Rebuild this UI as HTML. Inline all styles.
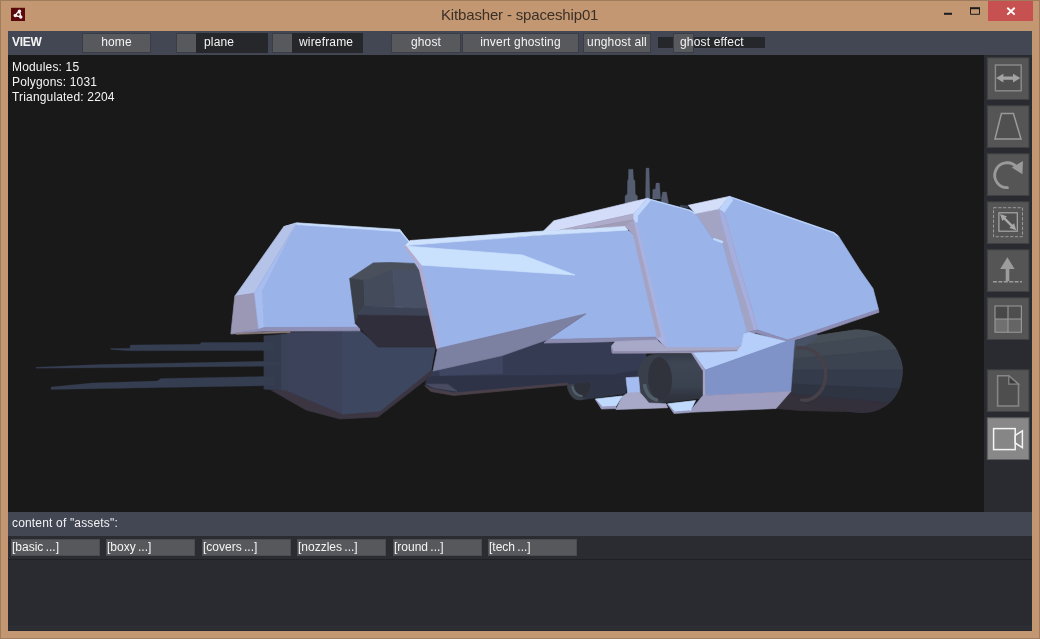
<!DOCTYPE html>
<html>
<head>
<meta charset="utf-8">
<title>Kitbasher - spaceship01</title>
<style>
*{box-sizing:border-box;margin:0;padding:0}
html,body{width:1040px;height:639px;overflow:hidden;background:#c39772;font-family:"Liberation Sans",sans-serif;font-size:12px;color:#f2f2f2}
#win{position:absolute;left:0;top:0;width:1040px;height:639px;background:#c39772;border:1px solid #a07c5f}
#title{will-change:transform;position:absolute;left:440px;top:5px;white-space:nowrap;font-size:15px;color:#3a3027;line-height:18px;letter-spacing:-.16px}
.abs{position:absolute}
.btn,.lbl,.fold,.stats,#toolbar .abs,#assetbar .abs{will-change:transform}
#content{position:absolute;left:8px;top:31px;width:1024px;height:600px;background:#2a2b30;overflow:hidden}
#toolbar{position:absolute;left:0;top:0;width:1024px;height:24px;background:#424753}
#viewport{position:absolute;left:0;top:24px;width:976px;height:457px;background:#191919}
#side{position:absolute;left:976px;top:24px;width:48px;height:457px;background:#2a2b30}
#assetbar{position:absolute;left:0;top:481px;width:1024px;height:24px;background:#424753}
#folders{position:absolute;left:0;top:505px;width:1024px;height:24px;background:#2b2c31;border-bottom:1px solid #1f2024}
#lower{position:absolute;left:0;top:529px;width:1024px;height:71px;background:#2a2b30}
#lower:before,#lower:after{content:"";position:absolute;left:0;width:1024px;height:1px;background:#303136}
#lower:before{top:66px}#lower:after{top:68px}
.btn{position:absolute;top:2px;height:20px;background:#58595d;border:1px solid #3a3d46;text-align:center;line-height:16px;letter-spacing:.17px;font-size:12px;color:#f4f4f4;white-space:nowrap}
.chk{position:absolute;top:2px;height:20px;width:21px;background:#58595d;border:1px solid #3a3d46}
.lbl{position:absolute;top:2px;height:20px;background:#26272b;line-height:18px;letter-spacing:.17px;font-size:12px;color:#f4f4f4;white-space:nowrap}
.fold{position:absolute;top:3px;height:17px;width:89px;background:#57585b;border:1px solid #4b4c50;line-height:14px;padding-left:0px;word-spacing:-1px;font-size:12px;color:#f4f4f4;white-space:nowrap}
.stats{position:absolute;left:4px;top:5px;line-height:15px;letter-spacing:.17px;font-size:12px;color:#f4f4f4;white-space:pre}
</style>
</head>
<body>
<div id="win">
<div id="title">Kitbasher - spaceship01</div>
</div>
<svg width="1040" height="31" viewBox="0 0 1040 31" style="position:absolute;left:0;top:0">
<rect x="11" y="7.8" width="14" height="13.2" fill="#5b080c"/>
<g fill="#f6f2f2"><circle cx="19.4" cy="11.2" r="1.7"/><circle cx="15.3" cy="15.4" r="1.75"/><circle cx="20.8" cy="17" r="1.7"/><circle cx="18.4" cy="14.4" r="2.5"/><path d="M19.4,11.2 L15.3,15.4 L20.8,17 Z" stroke="#f6f2f2" stroke-width="1.2" stroke-linejoin="round"/></g>
<circle cx="18.4" cy="14.4" r="1.25" fill="#5b080c"/>
<rect x="944" y="12.8" width="8" height="2" fill="#1c1c1c"/>
<path fill="none" stroke="#1c1c1c" stroke-width="1" d="M970.5,8.5 H979.5 V14.3 H970.5 Z"/>
<rect x="970" y="7.2" width="10" height="2" fill="#1c1c1c"/>
<rect x="988" y="1" width="45" height="20" fill="#c75050"/>
<path fill="none" stroke="#ffffff" stroke-width="1.9" d="M1007.3,7.8 L1014.7,14.6 M1014.7,7.8 L1007.3,14.6"/>
</svg>
<div id="content">
  <div id="toolbar">
    <div class="abs" style="left:4px;top:4px;font-weight:bold;font-size:12px;line-height:15px;color:#f4f4f4;letter-spacing:-.25px">VIEW</div>
    <div class="btn" style="left:74px;width:69px">home</div>
    <div class="chk" style="left:168px"></div>
    <div class="lbl" style="left:188px;width:72px;padding-left:8px">plane</div>
    <div class="chk" style="left:264px"></div>
    <div class="lbl" style="left:284px;width:71px;padding-left:7px">wireframe</div>
    <div class="btn" style="left:383px;width:70px">ghost</div>
    <div class="btn" style="left:454px;width:117px">invert ghosting</div>
    <div class="btn" style="left:575px;width:68px">unghost all</div>
    <div class="abs" style="left:650px;top:6px;width:107px;height:11px;background:#26272b"></div>
    <div class="chk" style="left:665px"></div>
    <div class="abs" style="left:672px;top:2px;line-height:18px;font-size:12px;color:#f4f4f4;letter-spacing:.17px">ghost effect</div>
  </div>
  <div id="viewport">
<svg id="ship" width="1040" height="639" viewBox="0 0 1040 639" style="position:absolute;left:-8px;top:-55px" shape-rendering="geometricPrecision" stroke-width="0.7" stroke-linejoin="round">
<!-- antennas -->
<g fill="#555d71" stroke="#555d71" stroke-width="0.3">
<polygon points="628.6,169.2 633,169.2 633.5,179 635,181 635.3,194 637.5,196 637.5,203 625,203 625,196 627.3,194 627.5,181 628.4,179"/>
<polygon points="646,168 649,168 650,199 645.5,199"/>
<polygon points="656,183 659.5,183 660.5,199 652.5,199 652.8,189.5 655.5,189"/>
<polygon points="662.5,192 666.5,192 667.5,198 668.5,203 661,203 661.5,198"/>
<polygon points="680,205 688,205.8 688,208 680,207" fill="#3a4152" stroke="#3a4152"/>
</g>
<!-- lower front hull -->
<polygon fill="#343b4e" stroke="#343b4e" points="264,336 287.5,334 287.5,391 264,389"/>
<polygon fill="#3a4258" stroke="#3a4258" points="281.5,334.5 287.5,334 287.5,391 281.5,390.5"/>
<!-- prongs -->
<g fill="#353e51" stroke="#353e51" stroke-width="0.3">
<polygon points="110.6,348.6 129.8,348.2 130.5,345 200,344.2 201,342.6 274,342.3 274,350.4 129.8,350.8 110.6,349.4"/>
<polygon points="36,367.3 100,364.6 280,361 280,366 100,367.8 36,368.3"/>
<polygon points="51,387 92,383 157,381 161,378.5 274,376.3 274,385.6 51,389.5"/>
</g>
<polygon fill="#3b3642" stroke="#3b3642" points="271,390 287.5,391 342.5,414 380,411 431,370 436,372 378,417 340,419 306,410"/>
<polygon fill="#3c425a" stroke="#3c425a" points="287.5,332.5 360,331 380,347.5 435,347.5 431,370 380,411 342.5,414 287.5,391"/>
<polygon fill="#3d4760" stroke="#3d4760" points="342.5,331.5 360,331 380,347.5 435,347.5 431,370 380,411 342.5,414"/>

<!-- rear small engine (behind) -->
<path fill="#2f3546" stroke="#2f3546" d="M579,365 L626,360 L626,393.5 L580,400 Z"/>
<ellipse cx="579" cy="382.6" rx="12" ry="17.4" fill="#3a414b" stroke="#3a414b"/>
<ellipse cx="582.5" cy="382.6" rx="8.2" ry="15" fill="#2d3039" stroke="#2d3039"/>
<path fill="none" stroke="#52606b" stroke-width="2.2" d="M572.2,386 C573,391 576,395.5 582.5,396.3"/>
<!-- third block gray side -->
<!-- underside dark -->
<polygon fill="#353b53" stroke="#353b53" points="433,371 502.5,355.5 548,340 612,343 646,350 646,375 567.5,384 453.75,394 432.5,390 425,386"/>
<polygon fill="#2f3347" stroke="#2f3347" points="427,378 433.9,376.2 611.7,375 646,369 646,375 567.5,384 453.75,394 432.5,390 425,386"/>
<polygon fill="#494c61" stroke="#494c61" points="427,384.2 447.7,384.2 457,391.2 434,387.7"/>
<polygon fill="#4a4049" stroke="#4a4049" points="425,386 432.5,389 453.75,393 567.5,383 567.5,385 453.75,395.5 431,391.5"/>
<polygon fill="#3e4661" stroke="#3e4661" points="438,366 502.5,355.5 502.5,373.5 440,375.5"/>
<!-- upper front armor -->
<polygon fill="#9ab3e9" stroke="#9ab3e9" points="296.4,224 400,231 410,242 416,250 437,340 360,327.5 264.1,327.5 262.2,291.3"/>
<polygon fill="#cadefc" stroke="#cadefc" points="283.7,226.7 296.4,222.8 400,229.5 410,243 400,231.5 296.4,224.6"/>
<polygon fill="#b5c3e8" stroke="#b5c3e8" points="283.7,226.7 296.4,223.6 254.4,293.3 234.8,296.2"/>
<polygon fill="#9a98b5" stroke="#9a98b5" points="234.8,296.2 254.4,293.3 258.7,329.5 230.9,333.4"/>
<polygon fill="#a7bdf0" stroke="#a7bdf0" points="296.4,223.8 262.2,291.3 264.1,327.5 258.7,329.5 254.4,293.3"/>
<polygon fill="#8f8fb6" stroke="#8f8fb6" points="230.9,333.4 258.7,329.3 264.1,327.5 360,327.3 360,330.8 262,331.3 231,334"/>
<polygon fill="#8e7c7e" stroke="#8e7c7e" points="236,333.3 290,331.3 290,332.5 236,334.3"/>
<!-- cockpit -->
<polygon fill="#4a505b" stroke="#4a505b" points="349.7,278.5 373.2,262.9 390,262.5 414.4,263.4 420,272 392.8,270.3 363.8,280.3"/>
<polygon fill="#3a3f49" stroke="#3a3f49" points="349.7,278.5 363.8,280.3 364.7,305.7 358,315 355.3,323.5"/>
<polygon fill="#444b5b" stroke="#444b5b" points="363.8,280.3 392.8,270 395.7,306.6 364.7,305.7"/>
<polygon fill="#475064" stroke="#475064" points="392.8,270 420,271 428,308.5 395.7,306.6"/>
<polygon fill="#3c4354" stroke="#3c4354" points="364.7,305.7 428,308.5 430,316 358,315"/>
<polygon fill="#2f2e3a" stroke="#2f2e3a" points="358,315 430,316 437,347 377.8,347 355.3,323.5"/>
<!-- back top block behind centre -->
<polygon fill="#d3ddf9" stroke="#d3ddf9" points="543,231.5 553.8,220.8 647.7,198.2 633.8,213.8 560,230"/>
<polygon fill="#aeacca" stroke="#aeacca" points="560,230 633.8,213.8 634.6,219.5 591,227.5"/>
<polygon fill="#a19db9" stroke="#a19db9" points="591,227.5 634.6,219.5 632.5,230 626,227"/>
<!-- centre block -->
<polygon fill="#9ab3e9" stroke="#9ab3e9" points="405,246 411,244.5 626,229.5 631,232.3 634,235.2 657.5,336 657.5,337 548,339.5 586,314 437.5,349 420,265"/>
<polygon fill="#cfe2fd" stroke="#cfe2fd" points="405,246 410,240.5 544,231 625.5,226.5 628,230 544,235 411,245"/>
<polygon fill="#c9e1fd" stroke="#c9e1fd" points="405,246 522.5,255 575,275 420,265"/>
<polygon fill="#b3abcd" stroke="#b3abcd" points="404,246.3 406,246 421,265 439,348.5 437,349.5 418.5,266"/>
<polygon fill="#7c80a1" stroke="#7c80a1" points="437.5,348.75 586,313.75 548,339.5 502.5,355.5 433,371"/>
<polygon fill="#8c8cb0" stroke="#8c8cb0" points="548,339.5 657.5,337 658,341 544,343"/>

<defs>
<linearGradient id="gEng" x1="0" y1="0" x2="0" y2="1">
<stop offset="0" stop-color="#464e58"/><stop offset="0.3" stop-color="#3b434f"/><stop offset="0.55" stop-color="#333a49"/><stop offset="0.85" stop-color="#2e3240"/><stop offset="1" stop-color="#36313a"/>
</linearGradient>
<linearGradient id="gCyl" x1="0" y1="0" x2="0" y2="1">
<stop offset="0" stop-color="#343a46"/><stop offset="0.2" stop-color="#3e4654"/><stop offset="0.65" stop-color="#3a4250"/><stop offset="0.85" stop-color="#30353f"/><stop offset="1" stop-color="#2c3039"/>
</linearGradient>
</defs>
<polygon fill="#a3a3c4" stroke="#a3a3c4" points="695.3,213.5 718.7,209.2 722.3,225.2 732,260.4 747,307.4 754,330.5 747,332.5 722.3,242 712.9,239.3"/>
<!-- second block -->
<polygon fill="#9ab3e9" stroke="#9ab3e9" points="647.7,198.5 690,210 695.3,213.5 712.9,239.3 722.3,242.3 747,332 743.8,333.8 741.5,345.4 736,348.5 667,348.5 657,338 636,252 634,214"/>
<polygon fill="#c2dbfd" stroke="#c2dbfd" points="712.9,239.3 714,238.3 723,241.5 722.3,243"/>
<polygon fill="#a6a2c2" stroke="#a6a2c2" points="625.5,226.8 633.8,219.3 634.2,222 661.6,337 657.3,338 657,336 633.5,235.2 631,232"/>
<polygon fill="#a9b2e0" stroke="#a9b2e0" points="634.2,222 636.6,222 667,348.5 657.3,338 661.6,337"/>
<polygon fill="#c0d6fb" stroke="#c0d6fb" points="647.7,198.5 650.5,200.5 637.5,216 637.5,222 635.4,222 633.8,219 633.8,213.8"/>
<!-- flange under second block -->
<polygon fill="#a8a8c8" stroke="#a8a8c8" points="611.5,346 615.4,341.5 657,340 666,347.5 736,347.5 740.5,346 740,351.5 690.8,353 661.5,353 612.3,353"/>
<polygon fill="#8e8aa8" stroke="#8e8aa8" points="611.5,346.5 612.3,353 738,351.8 737,350.3 661.5,351.5 613,351.5"/>
<!-- third block -->
<polygon fill="#d4def9" stroke="#d4def9" points="688.2,205.3 729.3,196.4 718.7,209 695.3,213.5"/>
<polygon fill="#9ab3e9" stroke="#9ab3e9" points="729.2,196.2 833.8,232.3 838.5,236 860,270 873,288.5 878.5,309.5 787.7,340 757.5,330 751.6,307.4 737.5,260.4 728,225.2 723.4,212.3"/>
<polygon fill="#bcd3fa" stroke="#bcd3fa" points="729.2,196.2 733,200 724,212.6 718.7,209.2"/>
<polygon fill="#a6aedd" stroke="#a6aedd" points="718.7,209.2 723.4,212.3 728,225.2 737.5,260.4 751.6,307.4 757.5,330 754,330.8 747,307.4 732,260.4 722.3,225.2"/>
<polygon fill="#8e8eb6" stroke="#8e8eb6" points="747,332.3 757.5,330 787.7,340 878.5,309.5 879,312.3 787.7,343.3 756,332.8 748,334"/>
<!-- big engine -->
<clipPath id="cEng"><path d="M794.9,340.3 L817.6,334.9 L855,329.4 C864,329.3 870,330.5 874,331.7 C881,334 886,337 889.5,340.3 C894,345 897,349 899,354.4 C901.5,360 902.8,365 902.8,370 C902.8,376 902,381 900.5,385.7 C899,391 896,396 892.7,399.8 C889,404 885,407 880,409.2 C874,412 868,413 861.4,413 L842.6,411.5 L819,406.8 L800.3,401.4 L791,393.5 Z"/></clipPath>
<g clip-path="url(#cEng)">
<path fill="url(#gEng)" d="M794.9,340.3 L817.6,334.9 L855,329.4 C864,329.3 870,330.5 874,331.7 C881,334 886,337 889.5,340.3 C894,345 897,349 899,354.4 C901.5,360 902.8,365 902.8,370 C902.8,376 902,381 900.5,385.7 C899,391 896,396 892.7,399.8 C889,404 885,407 880,409.2 C874,412 868,413 861.4,413 L842.6,411.5 L819,406.8 L800.3,401.4 L791,393.5 Z"/>
<polygon fill="#464e58" stroke="#464e58" points="788.0,320.0 912.0,320.0 912.0,331.5 788.0,347.5"/>
<polygon fill="#414954" stroke="#414954" points="788.0,347.5 912.0,331.5 912.0,348.3 788.0,359.3"/>
<polygon fill="#3b4350" stroke="#3b4350" points="788.0,359.3 912.0,348.3 912.0,370.0 788.0,370.0"/>
<polygon fill="#343b4b" stroke="#343b4b" points="788.0,370.0 912.0,370.0 912.0,389.5 788.0,384.0"/>
<polygon fill="#2f3443" stroke="#2f3443" points="788.0,384.0 912.0,389.5 912.0,405.1 788.0,393.7"/>
<polygon fill="#34303b" stroke="#34303b" points="788.0,393.7 912.0,405.1 912.0,420.0 788.0,420.0"/>
</g>
<path fill="#485266" stroke="none" d="M794.6,340.2 L817,333.6 L817,338.3 L806,345.5 L794.6,348.5 Z"/>
<path fill="none" stroke="#464049" stroke-width="3.4" d="M796,348 C808,346 821,352 825,368 C828,383 821,396 808,400 L800,400.5"/>
<polygon fill="#35313b" stroke="#35313b" points="790.8,391.5 776,408.5 800,410.5 842.6,411.5 819,406.8 800.3,401.4"/>
<!-- small engine 1 body -->
<path fill="url(#gCyl)" d="M655,353.8 L702.3,353.8 L702.3,398.5 L658,403.8 Z"/>
<!-- skid -->
<polygon fill="#b5cefa" stroke="#b5cefa" points="693,353 737,351.5 741.5,345.4 743.8,333.8 748.5,332.3 786,341.5 705.4,370"/>
<polygon fill="#a4a4c8" stroke="#a4a4c8" points="691.5,353 693,353 705.4,370 706,395.4 703,395.4 703,370.8"/>
<polygon fill="#7f93c9" stroke="#7f93c9" points="705.4,370 786,341.5 794.6,340 790.8,391.5 706,395.4"/>
<polygon fill="#9e9dc0" stroke="#9e9dc0" points="706,395.4 790.8,391.5 776,408.5 689,412.3 703,395.4"/>
<!-- small engine 1 ring -->
<ellipse cx="654.6" cy="379.2" rx="17" ry="24.6" fill="#3a404b" stroke="#3a404b" transform="rotate(-3 654.6 379.2)"/>
<ellipse cx="660" cy="379" rx="11.5" ry="21.5" fill="#30323c" stroke="#30323c" transform="rotate(-3 660 379)"/>
<path fill="none" stroke="#505e6a" stroke-width="3.4" d="M644.5,384 C645.5,392 650,398.5 658,400.3"/>
<!-- strut 1 + feet -->
<polygon fill="#a4bcf0" stroke="#a4bcf0" points="626,377.7 638.5,377 640,393 627.7,393.5"/>
<polygon fill="#a8a8c8" stroke="#a8a8c8" points="627.7,393 640,392.5 649,403 666,403.8 667.7,407.7 616,409.5 622.3,396.5"/>
<polygon fill="#c0dafd" stroke="#c0dafd" points="595.4,399 622.3,396 616,406.3 602.3,407"/>
<polygon fill="#9c9cc0" stroke="#9c9cc0" points="595.4,399.5 602.3,407 616,406.3 616,408.5 601.5,409"/>
<polygon fill="#c0dafd" stroke="#c0dafd" points="667.7,403.8 695.5,400.6 690.5,410.8 674.6,412"/>
<polygon fill="#9c9cc0" stroke="#9c9cc0" points="667.7,404.3 674.6,412 689,410.8 689,412.5 674,413.5"/>
<path fill="none" stroke="#bdd5fb" stroke-width="1.1" d="M729.5,196.8 L833.6,232.8 L838,236.3"/>
<path fill="none" stroke="#bdd5fb" stroke-width="1.1" d="M648,199 L690,210.5 L695,213.8"/>
</svg>

    <div class="stats">Modules: 15
Polygons: 1031
Triangulated: 2204</div>
  </div>
  <div id="side">
<svg width="48" height="457" viewBox="984 55 48 457" style="position:absolute;left:0;top:0">
<g fill="#555555" stroke="#3f4044" stroke-width="1">
<rect x="987.3" y="57.8" width="41.7" height="41.7"/>
<rect x="987.3" y="105.8" width="41.7" height="41.7"/>
<rect x="987.3" y="153.8" width="41.7" height="41.7"/>
<rect x="987.3" y="201.8" width="41.7" height="41.7"/>
<rect x="987.3" y="249.8" width="41.7" height="41.7"/>
<rect x="987.3" y="297.8" width="41.7" height="41.7"/>
<rect x="987.3" y="369.8" width="41.7" height="41.7"/>
<rect x="987.3" y="417.8" width="41.7" height="41.7" fill="#888888" stroke="#5c5d60"/>
</g>
<!-- 1: fit width -->
<rect x="995.4" y="65" width="25.8" height="25.8" fill="#505050" stroke="#8c8c8c" stroke-width="1.4"/>
<path fill="#a2a2a2" d="M996,78.1 L1003.4,73.7 L1003.4,76.5 L1013,76.5 L1013,73.7 L1020.4,78.1 L1013,82.5 L1013,79.7 L1003.4,79.7 L1003.4,82.5 Z"/>
<!-- 2: perspective -->
<path fill="#505050" stroke="#9a9a9a" stroke-width="1.5" stroke-linejoin="miter" d="M1001.4,113.5 L1013.4,113.5 L1021,139 L995,139 Z"/>
<!-- 3: rotate -->
<path fill="none" stroke="#9a9a9a" stroke-width="2.8" d="M1008.6,187.6 A12.45,12.45 0 1 1 1016.7,167.2"/>
<path fill="#9a9a9a" d="M1023,161 L1011.8,167.6 L1022.4,174.2 Z"/>
<!-- 4: scale -->
<rect x="993.5" y="207.7" width="29" height="29" fill="none" stroke="#9a9a9a" stroke-width="1" stroke-dasharray="3.2 1.6"/>
<rect x="998.9" y="212.8" width="18.4" height="18.4" fill="#505050" stroke="#a8a8a8" stroke-width="1.2"/>
<path fill="#a8a8a8" d="M1000.0,214.0 L1002.3,220.9 L1003.8,219.4 L1010.8,226.5 L1009.4,228.0 L1016.3,230.2 L1014.0,223.3 L1012.5,224.8 L1005.5,217.7 L1006.9,216.2 Z"/>
<!-- 5: up arrow -->
<path fill="#9c9c9c" d="M1007.4,257.3 L1014.6,268.9 L1009.3,268.9 L1009.3,281 L1005.7,281 L1005.7,268.9 L1000.2,268.9 Z"/>
<path fill="none" stroke="#9c9c9c" stroke-width="1.4" stroke-dasharray="4 1.4" d="M993,281.7 L1022,281.7"/>
<!-- 6: quad view -->
<rect x="995" y="306" width="13" height="13" fill="#484848"/>
<rect x="1008" y="306" width="13.4" height="13" fill="#4e4e4e"/>
<rect x="995" y="319" width="13" height="13.3" fill="#707070"/>
<rect x="1008" y="319" width="13.4" height="13.3" fill="#656565"/>
<path fill="none" stroke="#9a9a9a" stroke-width="1.1" d="M995,306 H1021.4 V332.3 H995 Z M1008,306 V332.3 M995,319 H1021.4"/>
<!-- 7: document -->
<path fill="#4e4e4e" stroke="#868686" stroke-width="1.6" stroke-linejoin="miter" d="M997.6,375.8 L1008.8,375.8 L1018.5,384.2 L1018.5,406 L997.6,406 Z"/>
<path fill="#3c3c3c" stroke="#868686" stroke-width="1.3" d="M1008.8,375.8 L1008.8,384.2 L1018.5,384.2 Z"/>
<!-- 8: camera -->
<rect x="993.6" y="428.6" width="21.6" height="21" fill="#868686" stroke="#f4f4f4" stroke-width="1.5"/>
<path fill="#868686" stroke="#f4f4f4" stroke-width="1.5" stroke-linejoin="miter" d="M1015.2,435.4 L1022.4,430.8 L1022.4,447.6 L1015.2,443 Z"/>
</svg>

  </div>
  <div id="assetbar"><div class="abs" style="left:4px;top:4px;line-height:15px;letter-spacing:.17px">content of "assets":</div></div>
  <div id="folders">
    <div class="fold" style="left:3px">[basic ...]</div>
    <div class="fold" style="left:98px">[boxy ...]</div>
    <div class="fold" style="left:194px">[covers ...]</div>
    <div class="fold" style="left:289px">[nozzles ...]</div>
    <div class="fold" style="left:385px">[round ...]</div>
    <div class="fold" style="left:480px">[tech ...]</div>
  </div>
  <div id="lower"></div>
</div>
</body>
</html>
